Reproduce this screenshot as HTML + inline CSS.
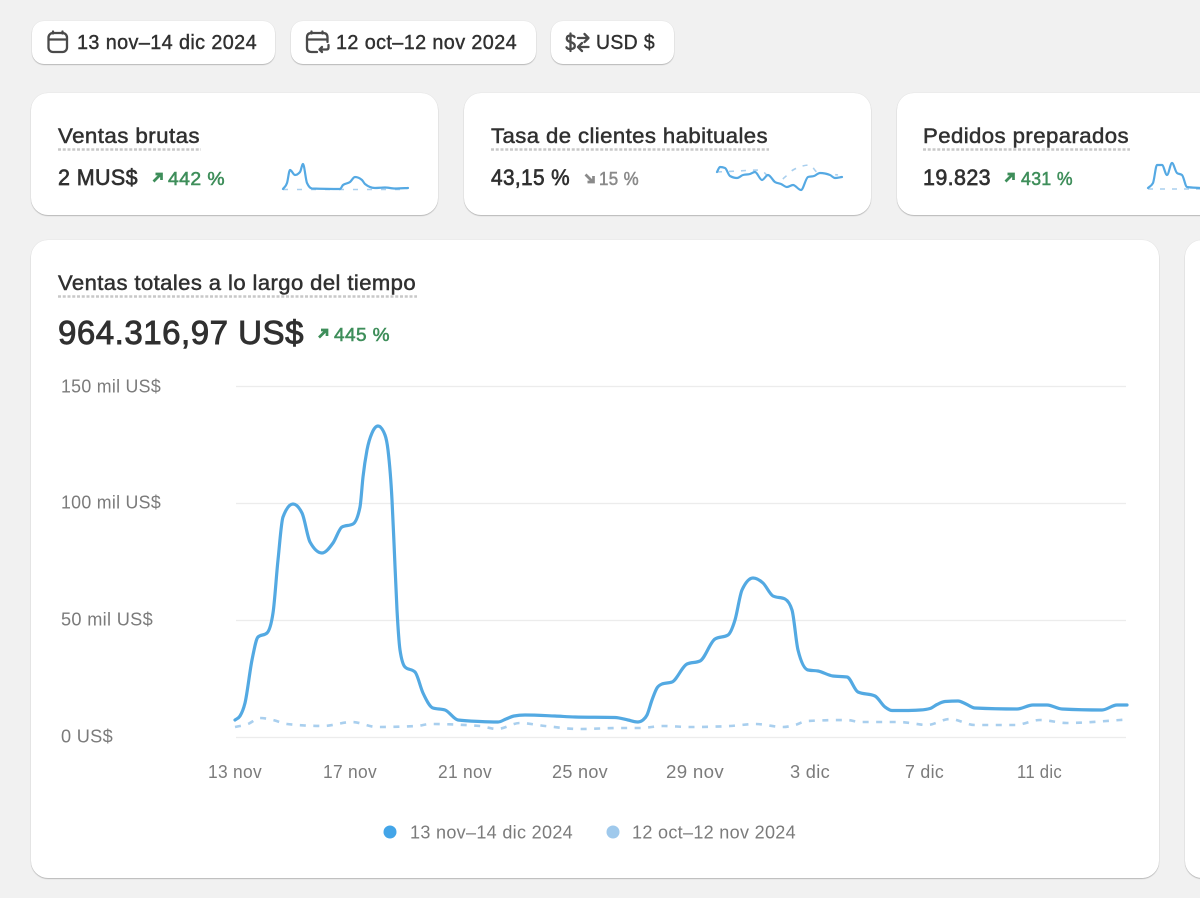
<!DOCTYPE html>
<html lang="es">
<head>
<meta charset="utf-8">
<title>Ventas</title>
<style>
html,body{margin:0;padding:0;background:#f1f1f1;width:1200px;height:898px;overflow:hidden}
body{position:relative;font-family:"Liberation Sans",sans-serif}
.c{position:absolute;background:#fff;border-radius:17px;box-shadow:0 1px 1px rgba(0,0,0,.22),0 0 1px rgba(0,0,0,.14)}
.b{border-radius:12px}
svg{position:absolute;left:0;top:0;filter:blur(.3px)}
text{font-family:"Liberation Sans",sans-serif}
.t{fill:#303030;stroke:#303030;stroke-width:.5px;font-size:21.5px;letter-spacing:.4px}
.v{fill:#303030;stroke:#303030;stroke-width:.65px;font-size:22px;letter-spacing:.4px}
.g{fill:#3e8e5a;stroke:#3e8e5a;stroke-width:.55px;font-size:18.5px;letter-spacing:.4px}
.n{fill:#8a8a8a;stroke:#8a8a8a;stroke-width:.55px;font-size:18.5px;letter-spacing:.4px}
.a{fill:#7b7b7b;font-size:18px;letter-spacing:.3px}
.btn{fill:#303030;stroke:#303030;stroke-width:.4px;font-size:20.5px;letter-spacing:.4px}
.u{stroke:#c8c8c8;stroke-width:2.4;stroke-dasharray:3 1.75;fill:none}
.i{fill:none;stroke:#4a4a4a;stroke-width:2.3;stroke-linecap:round;stroke-linejoin:round}
.grid{stroke:#ececec;stroke-width:1.3}
</style>
</head>
<body>
<div class="c b" style="left:32px;top:21px;width:243px;height:43px"></div>
<div class="c b" style="left:291px;top:21px;width:245px;height:43px"></div>
<div class="c b" style="left:551px;top:21px;width:123px;height:43px"></div>
<div class="c" style="left:31px;top:93px;width:407px;height:122px"></div>
<div class="c" style="left:464px;top:93px;width:407px;height:122px"></div>
<div class="c" style="left:897px;top:93px;width:407px;height:122px"></div>
<div class="c" style="left:31px;top:240px;width:1128px;height:638px"></div>
<div class="c" style="left:1185px;top:240px;width:200px;height:638px"></div>

<svg width="1200" height="898" viewBox="0 0 1200 898" xmlns="http://www.w3.org/2000/svg">
<!-- button icons -->
<g class="i">
<rect x="48.500" y="33" width="18.500" height="19" rx="4.500"/>
<path d="M49 39.500H66.500M53 31.500V33.500M62.500 31.500V33.500"/>
<path d="M317 52H311.500Q307 52 307 47.500V37.500Q307 33 311.500 33H323Q327.500 33 327.500 37.500V42M307 39.500H327.500M311.500 31.500V33.500M322.500 31.500V33.500"/>
<path d="M328.500 45V47.500Q328.500 49.500 326.500 49.500H319.500M322 47L319.500 49.500L322 52"/>
<path d="M574.500 37Q574 35.500 570.500 35.500Q566.800 35.500 566.800 38.500Q566.800 41 570.500 42Q574.800 43.200 574.800 46Q574.800 49 570.500 49Q567 49 566.500 47.300M570.500 33.500V51"/>
<path d="M578 38H588.500M584.500 34L588.500 38L584.500 42M588.500 47H578M582 43L578 47L582 51"/>
</g>
<text class="btn" x="77" y="49" textLength="180" lengthAdjust="spacingAndGlyphs">13 nov–14 dic 2024</text>
<text class="btn" x="336" y="49" textLength="181" lengthAdjust="spacingAndGlyphs">12 oct–12 nov 2024</text>
<text class="btn" x="596" y="49" textLength="59" lengthAdjust="spacingAndGlyphs">USD $</text>

<!-- metric cards -->
<text class="t" x="58" y="143" textLength="142" lengthAdjust="spacingAndGlyphs">Ventas brutas</text>
<path class="u" d="M58 149.500H201"/>
<text class="v" x="58" y="185" textLength="80" lengthAdjust="spacingAndGlyphs">2 MUS$</text>
<path d="M153.500 181.500L160.500 174.500M155.500 174H161.500V180" fill="none" stroke="#3e8e5a" stroke-width="2.700"/>
<text class="g" x="168" y="185" textLength="57" lengthAdjust="spacingAndGlyphs">442 %</text>

<text class="t" x="491" y="143" textLength="277" lengthAdjust="spacingAndGlyphs">Tasa de clientes habituales</text>
<path class="u" d="M491 149.500H769"/>
<text class="v" x="491" y="185" textLength="79" lengthAdjust="spacingAndGlyphs">43,15 %</text>
<path d="M585.500 174.500L592.500 181.500M593.500 176V182H587.500" fill="none" stroke="#8a8a8a" stroke-width="2.700"/>
<text class="n" x="599" y="185" textLength="40" lengthAdjust="spacingAndGlyphs">15 %</text>

<text class="t" x="923" y="143" textLength="206" lengthAdjust="spacingAndGlyphs">Pedidos preparados</text>
<path class="u" d="M923 149.500H1130"/>
<text class="v" x="923" y="185" textLength="68" lengthAdjust="spacingAndGlyphs">19.823</text>
<path d="M1005.500 181.500L1012.500 174.500M1007.500 174H1013.500V180" fill="none" stroke="#3e8e5a" stroke-width="2.700"/>
<text class="g" x="1021" y="185" textLength="52" lengthAdjust="spacingAndGlyphs">431 %</text>

<!-- sparklines -->
<path id="s1d" fill="none" stroke="#a9cfee" stroke-width="1.600" stroke-dasharray="5 9"/>
<path id="s1" fill="none" stroke="#55a9e3" stroke-width="2.200" stroke-linecap="round"/>
<path id="s2d" fill="none" stroke="#a9cfee" stroke-width="1.600" stroke-dasharray="5 7"/>
<path id="s2" fill="none" stroke="#55a9e3" stroke-width="2.200" stroke-linecap="round"/>
<path id="s3d" fill="none" stroke="#a9cfee" stroke-width="1.600" stroke-dasharray="5 7"/>
<path id="s3" fill="none" stroke="#55a9e3" stroke-width="2.200" stroke-linecap="round"/>

<!-- main card -->
<text class="t" x="58" y="290" textLength="358" lengthAdjust="spacingAndGlyphs">Ventas totales a lo largo del tiempo</text>
<path class="u" d="M58 296.500H417"/>
<text x="58" y="344" font-size="33.500" fill="#303030" stroke="#303030" stroke-width=".9" letter-spacing=".5" textLength="246" lengthAdjust="spacingAndGlyphs">964.316,97 US$</text>
<path d="M319 337.500L326 330.500M321 330H327V336" fill="none" stroke="#3e8e5a" stroke-width="2.700"/>
<text class="g" x="334" y="341" textLength="56" lengthAdjust="spacingAndGlyphs">445 %</text>

<path class="grid" d="M236 386.500H1126M236 503.500H1126M236 620.500H1126M236 737.500H1126"/>
<text class="a" x="61" y="392.500" textLength="100" lengthAdjust="spacingAndGlyphs">150 mil US$</text>
<text class="a" x="61" y="508.500" textLength="100" lengthAdjust="spacingAndGlyphs">100 mil US$</text>
<text class="a" x="61" y="625.500" textLength="92" lengthAdjust="spacingAndGlyphs">50 mil US$</text>
<text class="a" x="61" y="742.500" textLength="52" lengthAdjust="spacingAndGlyphs">0 US$</text>

<path id="md" fill="none" stroke="#a9cfee" stroke-width="2.600" stroke-dasharray="6 7.500"/>
<path id="m" fill="none" stroke="#53a9e2" stroke-width="3.200" stroke-linecap="round"/>

<text class="a" x="208" y="778" textLength="54" lengthAdjust="spacingAndGlyphs">13 nov</text>
<text class="a" x="323" y="778" textLength="54" lengthAdjust="spacingAndGlyphs">17 nov</text>
<text class="a" x="438" y="778" textLength="54" lengthAdjust="spacingAndGlyphs">21 nov</text>
<text class="a" x="552" y="778" textLength="56" lengthAdjust="spacingAndGlyphs">25 nov</text>
<text class="a" x="666" y="778" textLength="58" lengthAdjust="spacingAndGlyphs">29 nov</text>
<text class="a" x="790" y="778" textLength="40" lengthAdjust="spacingAndGlyphs">3 dic</text>
<text class="a" x="905" y="778" textLength="39" lengthAdjust="spacingAndGlyphs">7 dic</text>
<text class="a" x="1017" y="778" textLength="45" lengthAdjust="spacingAndGlyphs">11 dic</text>

<circle cx="390" cy="832" r="6.500" fill="#43a5e8"/>
<text class="a" x="410" y="838.500" textLength="163" lengthAdjust="spacingAndGlyphs">13 nov–14 dic 2024</text>
<circle cx="613" cy="832" r="6.500" fill="#9fc9ec"/>
<text class="a" x="632" y="838.500" textLength="164" lengthAdjust="spacingAndGlyphs">12 oct–12 nov 2024</text>
</svg>
<script>
function sg(v){return v<0?-1:1;}
function sm(p){
  var n=p.length,m=[],i;
  for(i=0;i<n;i++){
    if(i==0||i==n-1){
      var a=i==0?p[0]:p[n-2],b=i==0?p[1]:p[n-1];
      m[i]=(b[1]-a[1])/(b[0]-a[0]);
    }else{
      var h0=p[i][0]-p[i-1][0],h1=p[i+1][0]-p[i][0];
      var s0=(p[i][1]-p[i-1][1])/h0,s1=(p[i+1][1]-p[i][1])/h1;
      var q=(s0*h1+s1*h0)/(h0+h1);
      m[i]=(sg(s0)+sg(s1))*Math.min(Math.abs(s0),Math.abs(s1),0.5*Math.abs(q))||0;
    }
  }
  var d="M"+p[0][0]+" "+p[0][1];
  for(i=0;i<n-1;i++){
    var h=(p[i+1][0]-p[i][0])/3;
    d+="C"+(p[i][0]+h).toFixed(1)+" "+(p[i][1]+m[i]*h).toFixed(1)+" "+(p[i+1][0]-h).toFixed(1)+" "+(p[i+1][1]-m[i+1]*h).toFixed(1)+" "+p[i+1][0]+" "+p[i+1][1];
  }
  return d;
}
function s(id,p){document.getElementById(id).setAttribute("d",sm(p));}
s("m",[[235,720],[240,716],[245,703],[252,660],[258,637],[267,633],[273,613],[278,560],[283,517],[293,504],[302,513],[310,542],[322,553],[333,543],[342,527],[353,524],[360,507],[363,477],[367,450],[372,433],[378,426],[385,435],[388,450],[392,500],[394,543],[397,610],[400,650],[405,667],[415,672],[423,693],[433,708],[445,710],[458,720],[480,721.5],[498,722],[506,719],[514,716],[525,715],[555,716],[575,717],[615,717.5],[628,720],[638,722],[643,720],[647,715],[652,700],[657,688],[662,684],[672,682],[687,664],[700,661],[715,639],[728,635],[735,620],[742,590],[753,578],[763,583],[773,596],[785,599],[792,610],[798,650],[808,670],[818,671],[833,676],[847,677],[858,692],[875,696],[885,707],[892,710.5],[905,710.5],[920,710],[930,708.5],[937,704.5],[945,701.5],[958,701],[966,704],[975,708],[1017,709],[1033,705],[1047,705],[1062,709],[1102,710],[1117,705],[1127,705]]);
s("md",[[235,727],[248,724],[260,718],[273,720],[287,724],[323,726],[352,722],[377,727],[417,726],[430,724],[480,726],[497,729],[520,723],[545,726],[580,729],[620,728],[640,728],[663,726],[690,727],[730,726],[755,724],[783,727],[795,725],[807,721],[847,720],[860,722],[900,722],[910,723],[927,725],[950,719],[975,725],[1015,725],[1040,720],[1067,723],[1120,720],[1127,719.5]]);
s("s1",[[283,189],[287,183],[290,170],[295,175],[300,172],[303,164],[307,183],[312,188.5],[340,189],[343,185],[350,182],[355,177],[362,180],[365,184],[375,188],[385,187.5],[395,188.5],[408,188]]);
s("s1d",[[283,189.5],[408,189.5]]);
s("s2",[[717,172],[720,167],[725,168],[730,176],[737,178],[743,175],[750,174],[755,172],[762,180],[768,175],[775,182],[781,184],[787,187],[793,185],[801,190],[808,177],[814,176],[820,173],[830,175],[835,178],[842,177]]);
s("s2d",[[717,172],[737,171],[760,170],[768,176],[777,183],[785,177],[793,170],[810,165],[817,172],[838,175]]);
s("s3",[[1148,188],[1153,183],[1157,165],[1162,165],[1167,175],[1172,163],[1177,173],[1182,175],[1187,187],[1200,188]]);
s("s3d",[[1148,189],[1200,189]]);
</script>
</body>
</html>
